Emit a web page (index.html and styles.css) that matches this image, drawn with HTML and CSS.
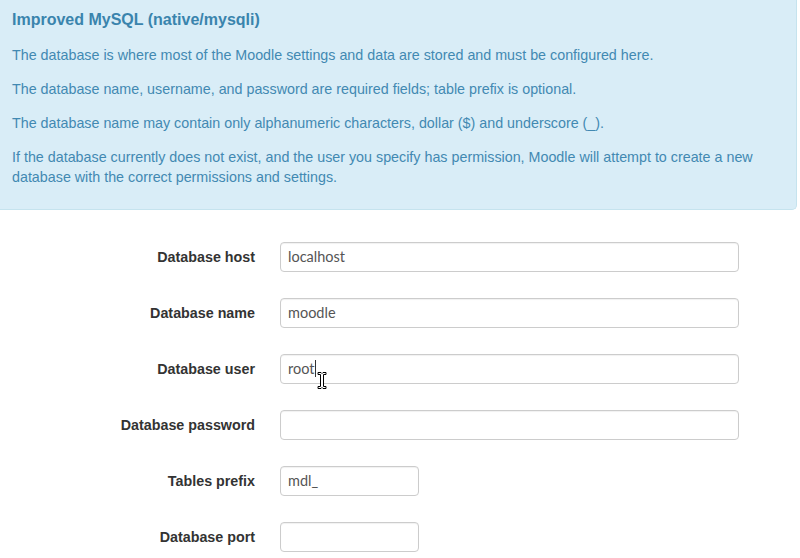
FILE: index.html
```html
<!DOCTYPE html>
<html>
<head>
<meta charset="utf-8">
<link rel="stylesheet" href="styles.css">
</head>
<body>
<div class="alert">
  <h3 class="alert-title">Improved MySQL (native/mysqli)</h3>
  <p>The database is where most of the Moodle settings and data are stored and must be configured here.</p>
  <p>The database name, username, and password are required fields; table prefix is optional.</p>
  <p>The database name may contain only alphanumeric characters, dollar ($) and underscore (_).</p>
  <p>If the database currently does not exist, and the user you specify has permission, Moodle will attempt to create a new database with the correct permissions and settings.</p>
</div>
<form class="form">
  <div class="row">
    <label class="label">Database host</label>
    <div class="field">localhost</div>
  </div>
  <div class="row">
    <label class="label">Database name</label>
    <div class="field">moodle</div>
  </div>
  <div class="row">
    <label class="label">Database user</label>
    <div class="field field-active">root<span class="caret"></span>
      <svg class="ibeam" width="10" height="19" viewBox="0 0 10 19">
        <path d="M1 1.5h3l1 1 1-1h3v2H6.5v12H9v2H6l-1-1-1 1H1v-2h2.5v-12H1z" fill="#fff" stroke="#000" stroke-width="1"/>
      </svg>
    </div>
  </div>
  <div class="row">
    <label class="label">Database password</label>
    <div class="field"></div>
  </div>
  <div class="row">
    <label class="label">Tables prefix</label>
    <div class="field field-short">mdl_</div>
  </div>
  <div class="row">
    <label class="label">Database port</label>
    <div class="field field-short"></div>
  </div>
</form>
</body>
</html>
```
FILE: styles.css
```css
html, body {
  margin: 0;
  padding: 0;
  background: #ffffff;
}
body {
  font-family: "Liberation Sans", Arial, sans-serif;
  width: 800px;
  height: 558px;
  overflow: hidden;
}
.alert {
  box-sizing: border-box;
  width: 797px;
  height: 210px;
  background: #d9edf7;
  border-right: 1px solid #c5e3ee;
  border-bottom: 1px solid #c5e3ee;
  border-bottom-right-radius: 5px;
  padding: 10px 12px 0 12px;
  color: #4289b2;
}
.alert-title {
  margin: 0;
  font-size: 16px;
  line-height: 20px;
  font-weight: bold;
  color: #3a84ad;
}
.alert p {
  margin: 14px 0 0 0;
  font-size: 14.3px;
  line-height: 20px;
}
.alert p:first-of-type {
  margin-top: 15px;
}
.form {
  display: flex;
  flex-direction: column;
  gap: 26px;
  padding-top: 32px;
}
.row {
  display: grid;
  grid-template-columns: 255px 1fr;
  column-gap: 25px;
  align-items: center;
  height: 30px;
}
.label {
  text-align: right;
  font-size: 14.3px;
  font-weight: bold;
  color: #333333;
}
.field {
  position: relative;
  box-sizing: border-box;
  width: 459px;
  height: 30px;
  border: 1px solid #cccccc;
  border-radius: 4px;
  background: #ffffff;
  padding: 0 7px;
  font-family: Lato, "Open Sans", sans-serif;
  font-size: 14.5px;
  line-height: 28px;
  color: #555555;
  box-shadow: inset 0 1px 1px rgba(0,0,0,0.06);
}
.field-short {
  width: 139px;
}
.caret {
  display: inline-block;
  width: 1px;
  height: 17px;
  background: #333333;
  vertical-align: -3px;
}
.ibeam {
  position: absolute;
  left: 36px;
  top: 16px;
}
```
